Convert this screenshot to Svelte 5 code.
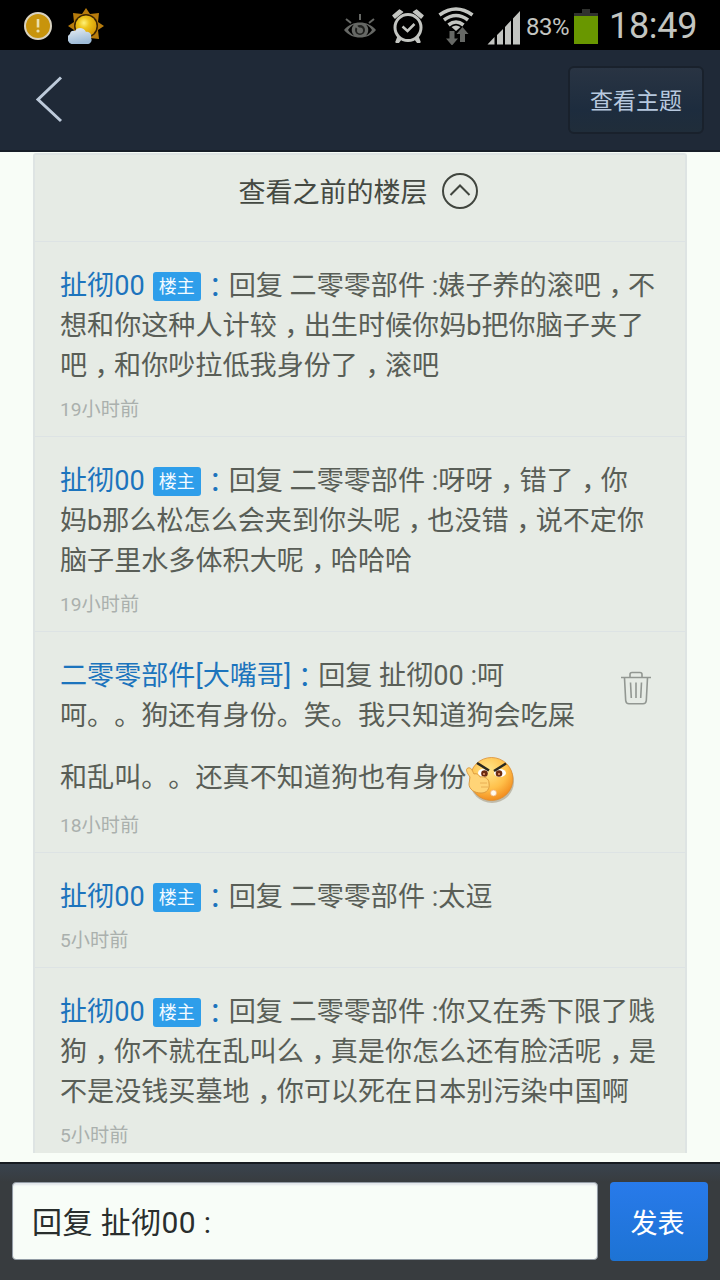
<script lang="ts">
	type Reply = {
		author: string
		isOp: boolean
		lines: string[]
		time: string
		removable?: boolean
		emoji?: boolean
	}

	const replies: Reply[] = [
		{
			author: '扯彻00',
			isOp: true,
			lines: [
				'回复 二零零部件 :婊子养的滚吧，不',
				'想和你这种人计较，出生时候你妈b把你脑子夹了',
				'吧，和你吵拉低我身份了，滚吧'
			],
			time: '19小时前'
		},
		{
			author: '扯彻00',
			isOp: true,
			lines: [
				'回复 二零零部件 :呀呀，错了，你',
				'妈b那么松怎么会夹到你头呢，也没错，说不定你',
				'脑子里水多体积大呢，哈哈哈'
			],
			time: '19小时前'
		},
		{
			author: '二零零部件[大嘴哥]',
			isOp: false,
			lines: ['回复 扯彻00 :呵', '呵。。狗还有身份。笑。我只知道狗会吃屎', '和乱叫。。还真不知道狗也有身份'],
			time: '18小时前',
			removable: true,
			emoji: true
		},
		{
			author: '扯彻00',
			isOp: true,
			lines: ['回复 二零零部件 :太逗'],
			time: '5小时前'
		},
		{
			author: '扯彻00',
			isOp: true,
			lines: [
				'回复 二零零部件 :你又在秀下限了贱',
				'狗，你不就在乱叫么，真是你怎么还有脸活呢，是',
				'不是没钱买墓地，你可以死在日本别污染中国啊'
			],
			time: '5小时前'
		}
	]
</script>

<!-- the comma sits in the middle of its cell -->
{#snippet textLine(text: string)}{#each text.split('，') as part, i}{#if i > 0}<span class="comma">，</span>{/if}{part}{/each}{/snippet}

<div class="screen">
	<div class="status">
		<svg class="warn" width="30" height="30" viewBox="0 0 30 30">
			<circle cx="15" cy="15" r="13" fill="#c8940c" stroke="#d8d2c0" stroke-width="2" />
			<path d="M15 8v8.5" stroke="#e9dfae" stroke-width="2.6" />
			<circle cx="15" cy="20" r="1.6" fill="#e9dfae" />
		</svg>
		<svg class="weather" width="36" height="36" viewBox="0 0 36 36">
			<defs>
				<radialGradient id="sun" cx="40%" cy="35%" r="65%">
					<stop offset="0" stop-color="#fff27a" />
					<stop offset="0.4" stop-color="#edc41b" />
					<stop offset="1" stop-color="#d89a08" />
				</radialGradient>
				<linearGradient id="cloud" x1="0" y1="0" x2="0.3" y2="1">
					<stop offset="0" stop-color="#e8eef3" />
					<stop offset="1" stop-color="#9dbbd8" />
				</linearGradient>
			</defs>
			<path
				d="M18 0l4 6 9-1-1 9 6 4-6 4 1 9-9-1-4 4-4-4-9 1 1-9-6-4 6-4-1-9 9 1z"
				fill="#b87c0c"
			/>
			<circle cx="18" cy="18" r="12" fill="#3c2503" />
			<circle cx="18" cy="18" r="10.500" fill="url(#sun)" />
			<path
				d="M6 36a5.500 5.500 0 0 1-4-10c0-3 3-4 5-3 2-4 9-4 11 1 4-1 6 3 5 6 2 3-1 6-3 6z"
				fill="url(#cloud)"
			/>
		</svg>
		<svg class="eye" width="32" height="26" viewBox="0 0 32 26">
			<path
				d="M0 16C8 6 24 6 32 16C24 26 8 26 0 16zM4 16c2 3 4 4.500 6 5.500-3-3-3-8 0-11-2 1-4 2.500-6 5.500zM28 16c-2-3-4-4.500-6-5.500 3 3 3 8 0 11 2-1 4-2.500 6-5.500z"
				fill="#666865"
				fill-rule="evenodd"
			/>
			<path d="M16 0v6M2 5l5 4M30 5l-5 4" stroke="#666865" stroke-width="2" />
			<circle cx="16" cy="16" r="5" fill="#20211f" />
			<circle cx="16" cy="16.500" r="3" fill="#666865" />
			<path d="M11.500 11.500l4 4" stroke="#666865" stroke-width="2" />
		</svg>
		<svg class="alarm" width="32" height="34" viewBox="0 0 32 34">
			<circle cx="16" cy="18.500" r="13" fill="none" stroke="#c3c5c1" stroke-width="3" />
			<path d="M10.500 17.500l5 4.500 7-7" fill="none" stroke="#c3c5c1" stroke-width="2.500" />
			<path
				d="M1 6.500L7.500 1l3 2L3 9zM31 6.500L24.500 1l-3 2L29 9zM6 28l3 2-3 4-2-1zM26 28l-3 2 3 4 2-1z"
				fill="#c3c5c1"
				stroke="#c3c5c1"
				stroke-width="1.500"
				stroke-linejoin="round"
			/>
		</svg>
		<svg class="wifi" width="36" height="38" viewBox="0 0 36 38">
			<g fill="none" stroke="#c3c5c1" stroke-width="3.600">
				<path d="M1.500 8Q18-4 34.500 8" />
				<path d="M6 13Q18 4 30 13" />
				<path d="M10.500 18Q18 12 25.500 18" />
			</g>
			<path d="M13.500 20Q18 17 22.500 20L18 24z" fill="#c3c5c1" />
			<path
				d="M11.500 24h5v7.500h3.500l-6 7-6-7h3.500zM22 35h5v-8h3.500l-6-7-6 7H22z"
				fill="#666865"
			/>
		</svg>
		<svg class="signal" width="34" height="34" viewBox="0 0 34 34">
			<path d="M.5 33.500l7-7.500v7.500zM10 24l6-6v15.500h-6zM18 16l6-6.500v24h-6zM26 7.500L33 0v33.500h-7z" fill="#c3c5c1" />
		</svg>
		<span class="percent">83%</span>
		<svg class="battery" width="24" height="36" viewBox="0 0 24 36">
			<path d="M8 0h8v4h8v4H0V4h8z" fill="#30322f" />
			<path d="M0 7h24v28H0z" fill="#699700" />
		</svg>
		<span class="clock">18:49</span>
	</div>

	<header>
		<button class="back" aria-label="返回">
			<svg width="28" height="48" viewBox="0 0 28 48">
				<path d="M26 2.500L3 24.500l23 21.500" fill="none" stroke="#bdcada" stroke-width="3" />
			</svg>
		</button>
		<button class="topic">查看主题</button>
	</header>

	<main>
		<div class="card">
			<div class="earlier">
				<span>查看之前的楼层</span>
				<svg width="38" height="38" viewBox="0 0 38 38" fill="none" stroke="#41463f" stroke-width="2">
					<circle cx="19" cy="19" r="17" />
					<path d="M9.500 23l9.500-9.500 9.500 9.500" />
				</svg>
			</div>

			{#each replies as reply}
				<div class="reply">
					{#each reply.lines as line, i}
						<div class="line" class:with-emoji={reply.emoji && i === reply.lines.length - 1}>
							{#if i === 0}
								<span class="author">{reply.author}</span>{#if reply.isOp}<span class="badge">楼主</span>{/if}<span class="colon">：</span>
							{/if}
							<span class="text">{@render textLine(line)}</span>
							{#if reply.emoji && i === reply.lines.length - 1}
								<svg class="emoji" width="48" height="48" viewBox="0 0 48 48">
									<defs>
										<radialGradient id="face" cx="42%" cy="30%" r="72%">
											<stop offset="0" stop-color="#ffe68c" />
											<stop offset="0.6" stop-color="#ffc04a" />
											<stop offset="1" stop-color="#f28a1c" />
										</radialGradient>
									</defs>
									<ellipse cx="26" cy="25.500" rx="22" ry="21.500" fill="#9a8c70" opacity="0.500" />
									<circle cx="25.500" cy="23" r="21.500" fill="url(#face)" stroke="#dc8d30" stroke-width="0.800" />
									<ellipse cx="17" cy="17" rx="5" ry="4" fill="#fff" />
									<ellipse cx="34" cy="17" rx="6" ry="4" fill="#fff" />
									<circle cx="18.500" cy="17.500" r="3.300" fill="#6b2b10" />
									<circle cx="33" cy="17.500" r="3.300" fill="#6b2b10" />
									<circle cx="18" cy="18" r="1" fill="#f0a070" />
									<circle cx="33" cy="18" r="1" fill="#f0a070" />
									<path d="M11 7l12 7.500M40 7.500L28 15" stroke="#292821" stroke-width="2.600" />
									<path
										d="M4 21c-3-4-5-8-2-9 3-1 4 2 6 6 3-1 5 1 6 3 5-1 9 2 9 6 1 6-2 10-8 10-7 0-12-4-12-9z"
										fill="#ffd477"
										stroke="#d9963b"
										stroke-width="0.900"
									/>
									<path d="M14 27h7M15 31h7" stroke="#e3a64d" stroke-width="0.800" />
									<circle cx="27.500" cy="37" r="3" fill="#fffaf0" stroke="#f0b080" stroke-width="0.700" />
								</svg>
							{/if}
						</div>
					{/each}
					<div class="time">{reply.time}</div>
					{#if reply.removable}
						<button class="trash" aria-label="删除">
							<svg width="30" height="34" viewBox="0 0 30 34" fill="none" stroke="#929792" stroke-width="1.600">
								<path d="M0 6.500h30M9 6V3.500Q9 1.500 11 1.500h8Q21 1.500 21 3.500V6" />
								<path d="M3.500 7l1.200 22.500Q5 32.800 8 32.800h14Q25 32.800 25.300 29.500L26.500 7" />
								<path d="M9.500 11.500l.8 15.500M15 11.500V27M20.500 11.500L19.700 27" />
							</svg>
						</button>
					{/if}
				</div>
			{/each}
		</div>
	</main>

	<footer>
		<div class="field">回复 扯彻00 :</div>
		<button class="send">发表</button>
	</footer>
</div>

<style>
	:global(body) {
		margin: 0;
	}

	.screen {
		width: 720px;
		height: 1280px;
		display: flex;
		flex-direction: column;
		overflow: hidden;
		background: #f8fdf7;
		font-family: Roboto, 'Noto Sans CJK SC', sans-serif;
		text-spacing-trim: space-all;
	}

	button {
		border: 0;
		padding: 0;
		background: none;
		font-family: inherit;
	}

	svg {
		display: block;
		flex: none;
	}

	.status {
		flex: none;
		height: 50px;
		box-sizing: border-box;
		display: flex;
		align-items: flex-start;
		padding-left: 23px;
		background: #000;
		color: #c3c5c1;
		white-space: nowrap;
	}

	.warn {
		margin-top: 11px;
	}

	.weather {
		margin: 8px 0 0 15px;
	}

	.eye {
		margin: 14px 0 0 240px;
	}

	.alarm {
		margin: 9px 0 0 16px;
	}

	.wifi {
		margin: 7px 0 0 14px;
	}

	.signal {
		margin: 11px 0 0 13px;
	}

	.percent {
		width: 48px;
		margin-left: 5px;
		font-size: 24px;
		line-height: 54px;
		letter-spacing: -0.5px;
	}

	.battery {
		margin-top: 9px;
	}

	.clock {
		margin-left: 11px;
		font-size: 36px;
		line-height: 53px;
		letter-spacing: -0.3px;
	}

	header {
		flex: none;
		height: 102px;
		box-sizing: border-box;
		display: flex;
		align-items: center;
		justify-content: space-between;
		padding: 0 16px 0 35px;
		background: #1f2937;
		border-bottom: 2px solid #171e28;
	}

	.back {
		padding-bottom: 2px;
	}

	.topic {
		width: 136px;
		height: 68px;
		padding-bottom: 2px;
		border: 2px solid #19212c;
		border-radius: 6px;
		background: linear-gradient(#293443, #1d2c3e 65%, #202d3a);
		color: #b6c8de;
		font-size: 23px;
	}

	main {
		flex: none;
		height: 1010px;
		box-sizing: border-box;
		padding: 1px 33px 9px;
	}

	.card {
		height: 1000px;
		box-sizing: border-box;
		overflow: hidden;
		background: #e6ebe5;
		border: 2px solid #dee4e3;
		border-bottom: 0;
		border-radius: 3px 3px 0 0;
	}

	.earlier {
		height: 86px;
		box-sizing: border-box;
		display: flex;
		justify-content: center;
		align-items: center;
		gap: 13px;
		padding: 0 3px 15px 0;
		color: #444942;
		font-size: 27px;
	}

	.reply {
		position: relative;
		border-top: 1px solid #dde3e4;
		padding: 24px 25px 2px;
		color: #595e57;
		font-size: 27.1px;
	}

	.line {
		display: flex;
		align-items: center;
		height: 40px;
		line-height: 40px;
		white-space: nowrap;
	}

	.with-emoji {
		height: 48px;
		padding-top: 18px;
	}

	.text {
		white-space: pre;
	}

	.comma {
		display: inline-block;
		width: 19.5px;
		padding-left: 7.5px;
		font-feature-settings: 'halt';
	}

	.author,
	.colon {
		color: #1c74bd;
	}

	.colon {
		width: 27px;
		font-family: 'Noto Sans CJK JP', sans-serif;
	}

	.badge {
		width: 48px;
		height: 29px;
		margin: 0 1px 0 8px;
		border-radius: 3px;
		background: #2e9eea;
		color: #f4fbff;
		font-size: 18px;
		line-height: 29px;
		text-align: center;
	}

	.emoji {
		margin-top: 4px;
	}

	.time {
		height: 48px;
		color: #aab0ad;
		font-size: 19.2px;
		line-height: 48px;
	}

	.trash {
		position: absolute;
		top: 39px;
		right: 34px;
	}

	footer {
		flex: none;
		height: 118px;
		box-sizing: border-box;
		display: flex;
		align-items: flex-start;
		gap: 12px;
		padding: 18px 12px 0;
		border-top: 2px solid #171c21;
		background: linear-gradient(#39434e, #383c3f 18px);
	}

	.field {
		flex: 1;
		height: 78px;
		box-sizing: border-box;
		padding-left: 19px;
		border: 1px solid #929ba4;
		border-radius: 4px;
		background: #f8fdf8;
		box-shadow: inset 0 2px 2px #e1e5ea;
		color: #292e2d;
		font-size: 30px;
		line-height: 79px;
		letter-spacing: 0.4px;
	}

	.send {
		width: 98px;
		height: 79px;
		padding-right: 3px;
		border-radius: 4px;
		background: linear-gradient(#287aea, #1d73d4);
		color: #fff;
		font-size: 27px;
	}
</style>
